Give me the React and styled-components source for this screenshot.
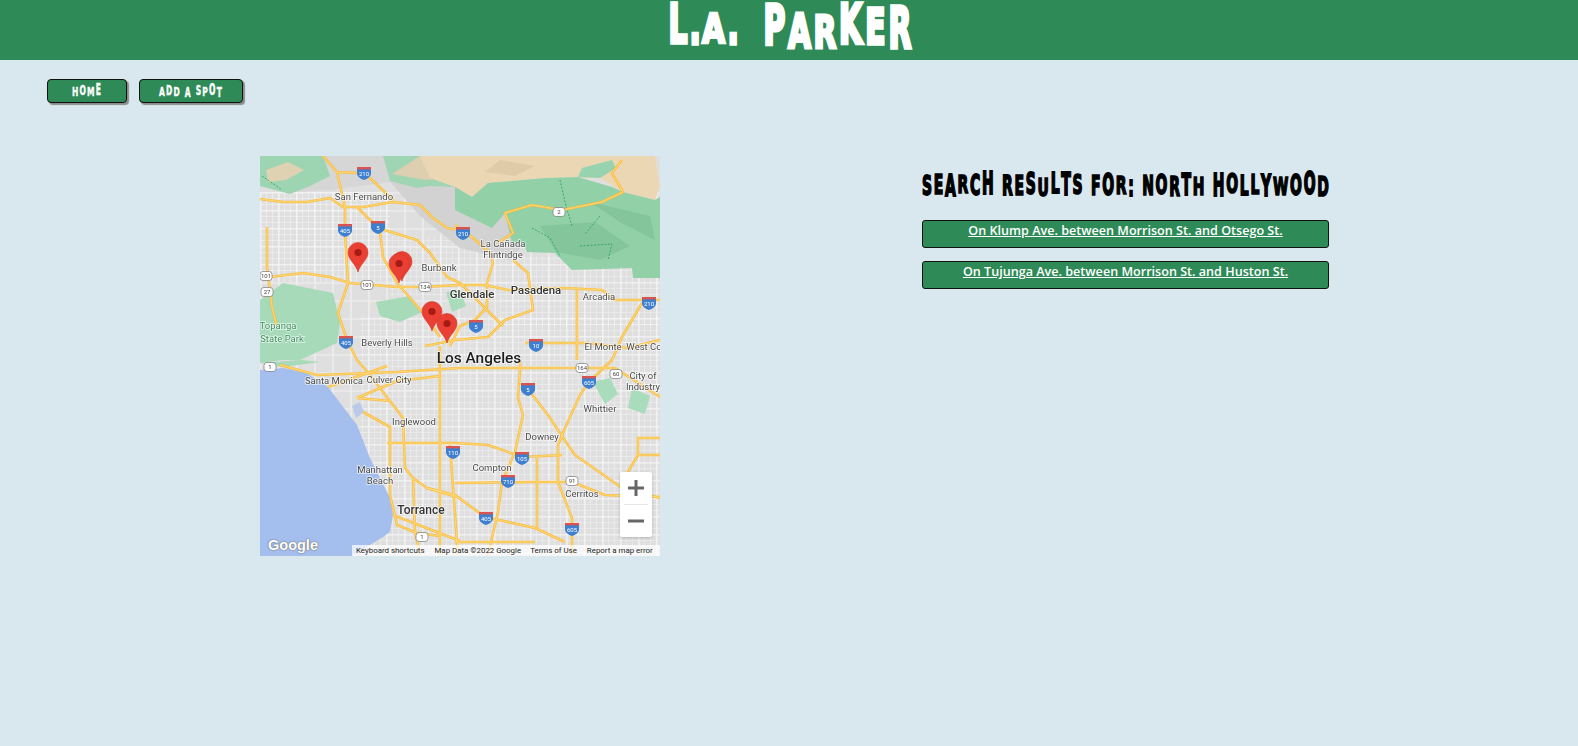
import React from "react";
import styled, { createGlobalStyle } from "styled-components";

const GlobalStyle = createGlobalStyle`
  html, body {
    margin: 0;
    padding: 0;
    height: 100%;
    background: #d9e8ef;
  }
  body {
    font-family: "Open Sans", "Liberation Sans", sans-serif;
  }
`;

const BLOCK_FONT = `"DejaVu Sans Condensed", "DejaVu Sans", sans-serif`;

const Page = styled.div`
  min-height: 746px;
  background: #d9e8ef;
`;

const Header = styled.header`
  height: 60px;
  background: #2e8b57;
  display: flex;
  justify-content: center;
`;

const Title = styled.h1`
  margin: 0 0 0 1px;
  height: 60px;
  display: flex;
  align-items: flex-start;
  font-family: ${BLOCK_FONT};
  font-weight: 700;
  font-size: 33px;
  line-height: 33px;
  color: #fff;
  -webkit-text-stroke: 2.2px #fff;
`;

// stretched letter: scaled about its baseline, so the font's caps get the tall look of the logo
const BlockLetter = styled.span`
  display: block;
  flex: none;
  width: ${(p) => (p.$w ? `${p.$w}px` : "auto")};
  white-space: pre;
  text-align: center;
  transform-origin: 50% 0.846em;
  transform: translateY(${(p) => p.$shift}px) scaleY(${(p) => p.$scale});
`;

const Nav = styled.nav`
  display: flex;
  gap: 12px;
  padding: 19px 0 0 47px;
`;

const NavButton = styled.a`
  box-sizing: border-box;
  width: ${(p) => p.$w}px;
  height: 24px;
  padding-top: 6px;
  display: flex;
  align-items: flex-start;
  justify-content: center;
  background: #2e8b57;
  border: 1px solid #111;
  border-radius: 4px;
  box-shadow: 2px 2px 1px #8b8b8b;
  color: #fff;
  font-family: ${BLOCK_FONT};
  font-weight: 700;
  font-size: 8.4px;
  line-height: 9px;
  letter-spacing: 1.2px;
  -webkit-text-stroke: 0.25px #fff;
`;

const Content = styled.main`
  display: flex;
  align-items: flex-start;
  gap: 262px;
  padding: 53px 0 0 260px;
`;

const MapFrame = styled.div`
  position: relative;
  width: 400px;
  height: 400px;
  flex: none;
  overflow: hidden;
  background: #e2e2e2;
`;

const MapArt = styled.svg`
  display: block;
  width: 400px;
  height: 400px;
  filter: blur(0.4px);
  font-family: Roboto, "Liberation Sans", sans-serif;
`;

const ZoomControl = styled.div`
  position: absolute;
  left: 360px;
  top: 316px;
  width: 32px;
  height: 65px;
  background: #fff;
  border-radius: 2px;
  box-shadow: 0 1px 3px rgba(0, 0, 0, 0.2);
  display: flex;
  flex-direction: column;
  align-items: center;
`;

const ZoomButton = styled.div`
  width: 100%;
  height: 32px;
  display: flex;
  align-items: center;
  justify-content: center;
  color: #666;
`;

const ZoomDivider = styled.div`
  width: 24px;
  height: 1px;
  background: #e6e6e6;
`;

const GoogleMark = styled.div`
  position: absolute;
  left: 8px;
  bottom: 2px;
  font-family: "Liberation Sans", sans-serif;
  font-weight: 700;
  font-size: 14.5px;
  line-height: 18px;
  color: #fff;
  text-shadow: 0 0 2px #777, 0 0 1px #666;
`;

const Attribution = styled.div`
  position: absolute;
  left: 92px;
  right: 0;
  bottom: 0;
  height: 11px;
  display: flex;
  align-items: center;
  background: rgba(255, 255, 255, 0.72);
  font-family: Roboto, "Liberation Sans", sans-serif;
  font-size: 7.9px;
  color: #222;
  white-space: nowrap;
`;

const AttributionItem = styled.span`
  margin-left: ${(p) => p.$gap}px;
`;

const Results = styled.section`
  width: 407px;
  padding-top: 17px;
`;

const ResultsHeading = styled.h2`
  margin: 0 0 21px;
  height: 26px;
  display: flex;
  align-items: flex-start;
  justify-content: space-between;
  font-family: ${BLOCK_FONT};
  font-weight: 700;
  font-size: 15.5px;
  line-height: 15.5px;
  color: #000;
  -webkit-text-stroke: 1px #000;
`;

const ResultList = styled.div`
  display: flex;
  flex-direction: column;
  gap: 13px;
`;

const ResultLink = styled.a`
  box-sizing: border-box;
  height: 28px;
  padding-top: 1px;
  text-align: center;
  background: #2e8b57;
  border: 1px solid #111;
  border-radius: 3px;
  color: #fff;
  font-family: "Open Sans", "Liberation Sans", sans-serif;
  font-weight: 600;
  font-size: 12.6px;
  line-height: 18px;
  text-decoration: underline;
`;

// cap height and baseline of the block font, in em
const CAP = 0.729;
const BASE = 0.846;

function letterProps(fontSize, height, bottom) {
  return {
    $scale: (height / (CAP * fontSize)).toFixed(3),
    $shift: (bottom - BASE * fontSize).toFixed(2),
  };
}

const titleLetters = [
  { c: "L", w: 23, h: 40, b: 43 },
  { c: ".", w: 10, h: 40, b: 44 },
  { c: "A", w: 28, h: 30, b: 43 },
  { c: ".", w: 10, h: 40, b: 44 },
  { c: " ", w: 25, h: 40, b: 44 },
  { c: "P", w: 24, h: 40, b: 44 },
  { c: "A", w: 26, h: 35, b: 48 },
  { c: "R", w: 25, h: 33, b: 48 },
  { c: "K", w: 26, h: 40, b: 43 },
  { c: "E", w: 24, h: 36, b: 44 },
  { c: "R", w: 25, h: 41, b: 48 },
];

const headingHeights = [20, 19, 22, 18, 21, 23, 19];
const headingBottoms = [24, 23, 25, 22, 24, 23, 25, 24];
const buttonHeights = [9, 10, 9, 11, 10];
const buttonBottoms = [10, 9, 10, 9, 11];

function JaggedText({ text, fontSize, heights, bottoms }) {
  return [...text].map((c, i) => (
    <BlockLetter key={i} {...letterProps(fontSize, heights[i % heights.length], bottoms[i % bottoms.length])}>
      {c}
    </BlockLetter>
  ));
}

const mountains = [
  { fill: "#d2d2d2", pts: "125,20 240,20 262,90 250,104 200,92 160,60" },
  { fill: "#d6d6d6", pts: "0,0 130,0 130,26 70,34 30,36 0,30" },
  { fill: "#e3d6b8", pts: "0,4 30,0 52,12 22,24 0,22" },
  { fill: "#9dd4b1", pts: "0,0 63,0 70,20 50,30 30,38 0,30" },
  { fill: "#dfd2b2", pts: "6,14 28,6 44,14 26,24 8,26" },
  { fill: "#a0d5b3", pts: "123,0 200,0 195,31 170,30 157,32 130,25" },
  { fill: "#ddcfb0", pts: "132,18 160,0 192,0 190,22 165,24" },
  { fill: "#ecd7b4", pts: "160,0 362,0 340,12 318,21 285,22 228,27 212,41 195,31 170,22" },
  { fill: "#ecd7b4", pts: "362,0 395,0 400,30 395,44 363,36 340,22 322,22" },
  { fill: "#e0cba8", pts: "240,4 275,10 255,20 225,16" },
  { fill: "#92d0a8", pts: "195,31 212,41 228,27 285,22 318,21 352,31 363,36 395,44 400,41 400,122 373,122 372,112 312,114 302,104 295,97 267,96 265,91 252,87 245,57 232,72 195,54" },
  { fill: "#84c59b", pts: "280,70 335,66 370,90 340,104 296,96" },
  { fill: "#84c59b", pts: "330,46 390,60 395,84 360,66" },
  { fill: "#97d3ae", pts: "318,21 322,12 352,4 356,12 340,22" },
  { fill: "#a6dab8", pts: "0,144 23,127 73,137 80,167 77,187 40,204 23,204 0,207" },
  { fill: "#a6dab8", pts: "116,146 150,140 162,156 140,166 120,160" },
  { fill: "#a9dcbb", pts: "186,136 200,134 206,150 192,156" },
  { fill: "#a6dab8", pts: "0,207 40,204 60,206 22,211" },
  { fill: "#a9dcbb", pts: "333,226 350,222 358,238 345,248" },
  { fill: "#a9dcbb", pts: "372,232 390,240 385,258 368,252" },
];

// freeway centre lines, in map pixels
const freeways = [
  "0,43 23,46 47,46 70,42 83,51 103,51 133,46 160,49 173,62 187,72 200,74 212,81",
  "63,0 77,16 97,17 110,22 133,44",
  "77,16 85,51 85,77 88,127 78,157 87,184 97,204 110,219 143,262 145,312 153,322 167,332 200,342",
  "97,51 118,72 157,84 170,97 187,121 200,127 225,152 243,170",
  "120,76 123,101 137,127 163,157 180,181",
  "10,121 43,117 70,121 90,127 137,131 163,131 200,129 225,129 248,134 305,132 342,134 355,144 382,144 400,144",
  "7,71 7,111 12,151 17,171",
  "362,4 352,17 363,36 342,46 302,54 272,49 245,57 253,77 238,87",
  "195,69 212,81 230,97 233,107 227,127 227,151 215,164 200,170 190,190",
  "253,104 268,117 273,154 245,164 228,181 195,184 165,190",
  "317,134 317,204",
  "265,187 328,187 368,192 400,184",
  "382,147 362,181 352,204 328,227 320,239 305,272 298,289 298,326 312,362 312,399",
  "20,209 57,219 137,216 200,212 232,212 312,212 355,212 400,241",
  "267,232 288,259 308,289 315,299 362,332 400,342",
  "260,204 260,212 258,242 263,259 255,296 242,326 238,356 228,399",
  "127,287 195,287 228,289 262,301 302,299",
  "195,327 275,326 312,326 345,339 400,341",
  "167,332 195,339 225,361 275,372 305,386",
  "180,190 180,399",
  "190,289 193,332 198,399",
  "195,386 275,386",
  "277,302 277,372",
  "400,282 378,282 378,299 362,326",
  "378,299 400,299",
  "103,256 130,271 130,339 137,369 157,377 180,380",
  "153,322 155,376 160,399",
  "133,359 200,385",
  "97,242 130,245",
  "68,231 127,210",
  "97,242 137,225 180,220",
];

const trails = [
  "272,72 290,82 300,100",
  "320,90 352,88 348,104",
  "300,24 306,50 312,70",
  "340,60 325,78",
  "2,20 22,34",
];

const shields = [
  [104, 17, "210"], [85, 74, "405"], [118, 71, "5"], [86, 186, "405"], [203, 77, "210"],
  [389, 147, "210"], [276, 189, "10"], [268, 233, "5"], [329, 226, "605"], [262, 302, "105"],
  [248, 325, "710"], [226, 362, "405"], [312, 373, "605"], [193, 296, "110"], [216, 170, "5"],
];

const routes = [
  [6, 120, "101"], [7, 136, "27"], [107, 129, "101"], [165, 131, "134"], [299, 56, "2"],
  [10, 211, "1"], [322, 212, "164"], [356, 218, "60"], [312, 325, "91"], [162, 381, "1"],
];

const labels = [
  { x: 104, y: 44, t: "San Fernando" },
  { x: 179, y: 115, t: "Burbank" },
  { x: 212, y: 142, t: "Glendale", s: 11.4, w: 500, fill: "#333" },
  { x: 243, y: 91, t: "La Cañada" },
  { x: 243, y: 102, t: "Flintridge" },
  { x: 276, y: 138, t: "Pasadena", s: 11.4, w: 500, fill: "#333" },
  { x: 339, y: 144, t: "Arcadia" },
  { x: 343, y: 194, t: "El Monte" },
  { x: 384, y: 194, t: "West Co" },
  { x: 18, y: 173, t: "Topanga", fill: "#3a8f60" },
  { x: 22, y: 186, t: "State Park", fill: "#3a8f60" },
  { x: 127, y: 190, t: "Beverly Hills" },
  { x: 219, y: 207, t: "Los Angeles", s: 15.4, w: 500, fill: "#1d1d1d" },
  { x: 74, y: 228, t: "Santa Monica" },
  { x: 129, y: 227, t: "Culver City" },
  { x: 154, y: 269, t: "Inglewood" },
  { x: 120, y: 317, t: "Manhattan" },
  { x: 120, y: 328, t: "Beach" },
  { x: 161, y: 358, t: "Torrance", s: 12, w: 500, fill: "#333" },
  { x: 282, y: 284, t: "Downey" },
  { x: 232, y: 315, t: "Compton" },
  { x: 322, y: 341, t: "Cerritos" },
  { x: 340, y: 256, t: "Whittier" },
  { x: 383, y: 223, t: "City of" },
  { x: 383, y: 234, t: "Industry" },
];

const pins = [
  [98, 116],
  [142, 125],
  [139, 127],
  [172, 175],
  [187, 187],
];

function MapDrawing() {
  return (
    <MapArt viewBox="0 0 400 400">
      <defs>
        <pattern id="streets" width="6" height="6" patternUnits="userSpaceOnUse">
          <path d="M0 .5H6M.5 0V6" stroke="#fff" strokeWidth=".7" fill="none" />
        </pattern>
        <pattern id="avenues" width="18" height="18" patternUnits="userSpaceOnUse">
          <path d="M0 1H18M1 0V18" stroke="#fff" strokeWidth="1.2" fill="none" />
        </pattern>
      </defs>
      <rect width="400" height="400" fill="#dfdfdf" />
      <rect y="36" width="130" height="90" fill="url(#streets)" opacity=".55" />
      <rect x="130" y="80" width="110" height="60" fill="url(#streets)" opacity=".4" />
      <rect x="100" y="160" width="300" height="240" fill="url(#streets)" opacity=".45" />
      <rect x="240" y="100" width="160" height="70" fill="url(#streets)" opacity=".4" />
      <rect y="36" width="400" height="364" fill="url(#avenues)" opacity=".55" />
      {mountains.map((m, i) => (
        <polygon key={i} points={m.pts} fill={m.fill} />
      ))}
      {trails.map((d) => (
        <polyline key={d} points={d} fill="none" stroke="#2fa35c" strokeWidth=".9" strokeDasharray="2 1.500" />
      ))}
      <path d="M0 214L23 212 47 217 68 231 87 256 97 269 110 302 130 342 133 359 130 376 123 381 92 400H0Z" fill="#a4bfee" />
      <polygon points="92,250 100,246 104,256 96,262" fill="#b9cbe8" />
      {freeways.map((d) => (
        <polyline key={d} points={d} fill="none" stroke="#fbbe3e" strokeWidth="2.6" strokeLinejoin="round" />
      ))}
      {freeways.map((d) => (
        <polyline key={d} points={d} fill="none" stroke="#fde08d" strokeWidth=".8" strokeLinejoin="round" />
      ))}
      {routes.map(([x, y, t]) => (
        <g key={`${x}-${t}`}>
          <rect x={x - 6} y={y - 4.5} width="12" height="9" rx="3" fill="#fff" stroke="#777" strokeWidth=".7" />
          <text x={x} y={y + 2.4} textAnchor="middle" fontSize="6" fill="#444">{t}</text>
        </g>
      ))}
      {shields.map(([x, y, t]) => (
        <g key={`${x}-${t}`}>
          <path d={`M${x - 7} ${y - 5}H${x + 7}V${y + 1}Q${x + 6} ${y + 5} ${x} ${y + 7}Q${x - 6} ${y + 5} ${x - 7} ${y + 1}Z`} fill="#3f7fd0" />
          <rect x={x - 7} y={y - 6} width="14" height="2.4" fill="#d9534f" />
          <text x={x} y={y + 3} textAnchor="middle" fontSize="6" fill="#fff">{t}</text>
        </g>
      ))}
      {labels.map((l) => (
        <text
          key={l.t}
          x={l.x}
          y={l.y}
          textAnchor="middle"
          fontSize={l.s || 9.5}
          fontWeight={l.w || 400}
          fill={l.fill || "#4a4a4a"}
          stroke="#fff"
          strokeWidth="1.6"
          strokeOpacity=".75"
          paintOrder="stroke"
        >
          {l.t}
        </text>
      ))}
      {pins.map(([x, y]) => (
        <g key={`${x}-${y}`}>
          <path
            d={`M${x} ${y}C${x - 2} ${y - 8} ${x - 10} ${y - 12} ${x - 10} ${y - 19.500}A10 10 0 1 1 ${x + 10} ${y - 19.500}C${x + 10} ${y - 12} ${x + 2} ${y - 8} ${x} ${y}Z`}
            fill="#ea3f33"
            stroke="#d33a2c"
            strokeWidth=".6"
          />
          <circle cx={x} cy={y - 19.5} r="3.6" fill="#a61b14" />
        </g>
      ))}
    </MapArt>
  );
}

export default function App() {
  return (
    <Page>
      <GlobalStyle />
      <Header>
        <Title>
          {titleLetters.map((l, i) => (
            <BlockLetter key={i} $w={l.w} {...letterProps(33, l.h, l.b)}>
              {l.c}
            </BlockLetter>
          ))}
        </Title>
      </Header>
      <Nav>
        <NavButton $w={80}>
          <JaggedText text="HOME" fontSize={8.4} heights={buttonHeights} bottoms={buttonBottoms} />
        </NavButton>
        <NavButton $w={104}>
          <JaggedText text="ADD A SPOT" fontSize={8.4} heights={buttonHeights} bottoms={buttonBottoms} />
        </NavButton>
      </Nav>
      <Content>
        <MapFrame>
          <MapDrawing />
          <ZoomControl>
            <ZoomButton>
              <svg width="16" height="16" viewBox="0 0 16 16">
                <path d="M6.500 0h3v6.500H16v3H9.500V16h-3V9.500H0v-3h6.500z" fill="currentColor" />
              </svg>
            </ZoomButton>
            <ZoomDivider />
            <ZoomButton>
              <svg width="16" height="16" viewBox="0 0 16 16">
                <path d="M0 6.500h16v3H0z" fill="currentColor" />
              </svg>
            </ZoomButton>
          </ZoomControl>
          <GoogleMark>Google</GoogleMark>
          <Attribution>
            <AttributionItem $gap={4}>Keyboard shortcuts</AttributionItem>
            <AttributionItem $gap={10}>Map Data ©2022 Google</AttributionItem>
            <AttributionItem $gap={9}>Terms of Use</AttributionItem>
            <AttributionItem $gap={10}>Report a map error</AttributionItem>
          </Attribution>
        </MapFrame>
        <Results>
          <ResultsHeading>
            <JaggedText
              text="SEARCH RESULTS FOR: NORTH HOLLYWOOD"
              fontSize={15.5}
              heights={headingHeights}
              bottoms={headingBottoms}
            />
          </ResultsHeading>
          <ResultList>
            <ResultLink>On Klump Ave. between Morrison St. and Otsego St.</ResultLink>
            <ResultLink>On Tujunga Ave. between Morrison St. and Huston St.</ResultLink>
          </ResultList>
        </Results>
      </Content>
    </Page>
  );
}
